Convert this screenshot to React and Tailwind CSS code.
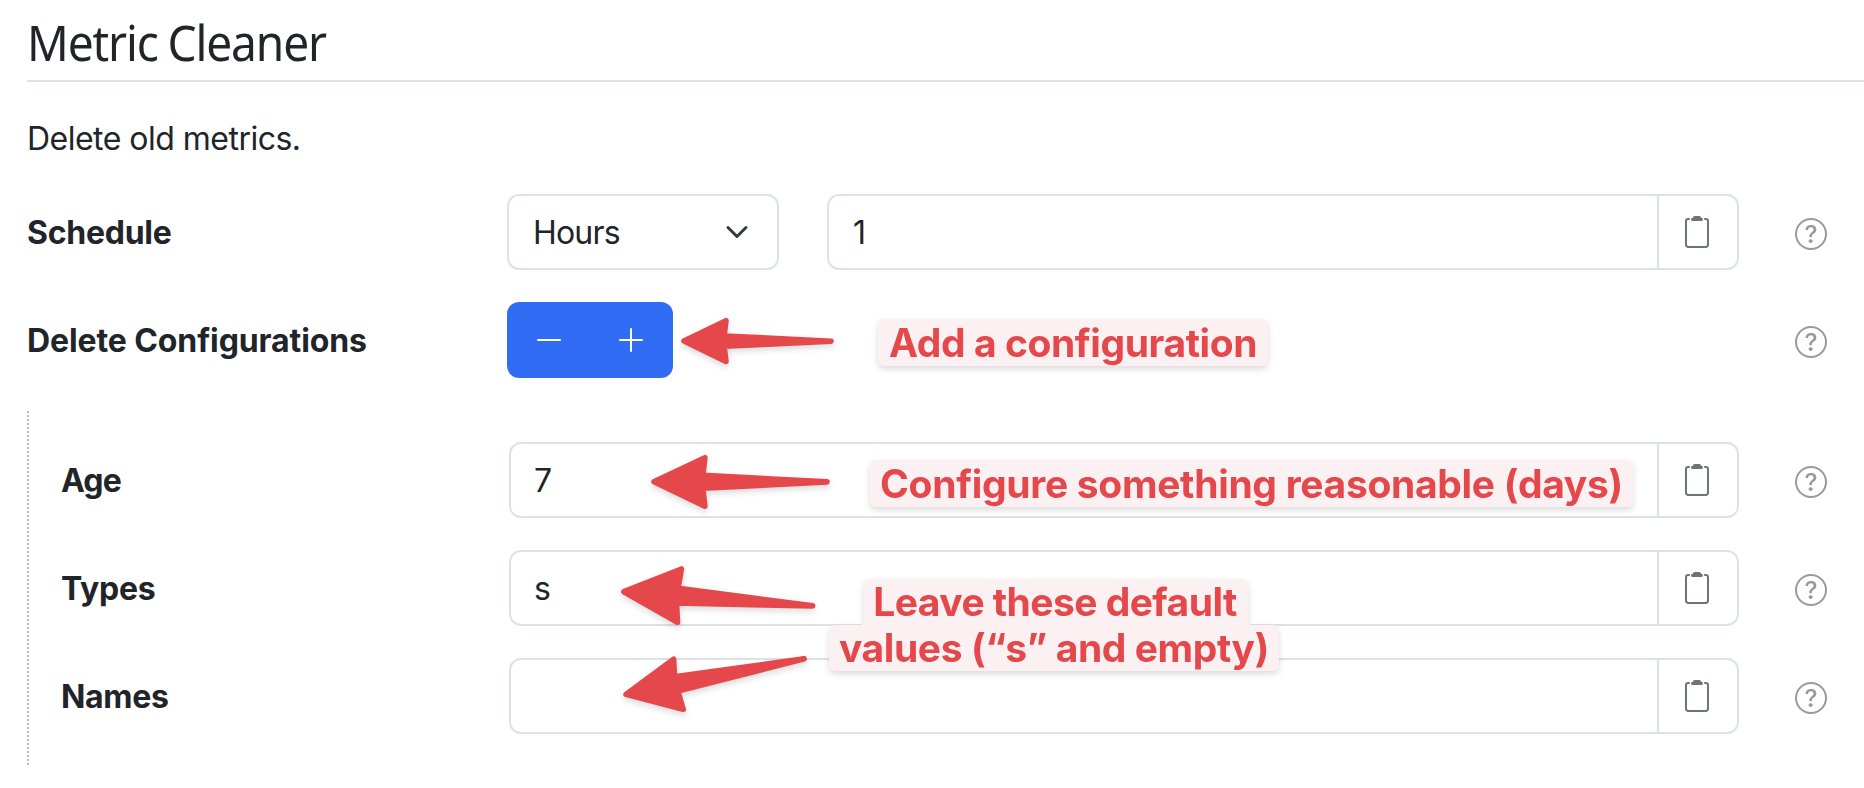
import { BsQuestionCircle } from "react-icons/bs";

function ClipboardIcon() {
  return (
    <svg width="24" height="32" viewBox="0 0 24 32" fill="none">
      <path
        d="M4.8 3H3.2Q1 3 1 5.2V28.6Q1 31 3.4 31H20.6Q23 31 23 28.6V5.2Q23 3 20.8 3H19.2"
        stroke="#6c757d"
        strokeWidth="2"
      />
      <path
        d="M6 3.6Q6 2 7.8 1.8Q8 0 9.8 0H14.2Q16 0 16.2 1.8Q18 2 18 3.6Q18 5 16.6 5H7.4Q6 5 6 3.6Z"
        fill="#6c757d"
      />
    </svg>
  );
}

function Help() {
  return (
    <button className="mt-1 ml-14 shrink-0" aria-label="Help">
      <BsQuestionCircle className="block h-8 w-8 text-[#999999]" />
    </button>
  );
}

function TextField({ value, padding = "pl-6" }) {
  return (
    <div className="flex h-[76px] flex-1 overflow-hidden rounded-xl border-2 border-[#dee2e6] bg-white">
      <div className={"flex flex-1 items-center pt-0.5 " + padding}>{value}</div>
      <button className="flex w-20 items-center justify-center border-l-2 border-[#dee2e6] pr-0.5" aria-label="Copy">
        <ClipboardIcon />
      </button>
    </div>
  );
}

function Row({ label, labelClass, children }) {
  return (
    <div className="flex h-[76px] items-center">
      <div className={"shrink-0 pt-0.5 font-bold " + labelClass}>{label}</div>
      <div className="flex flex-1 items-center">{children}</div>
      <Help />
    </div>
  );
}

const arrows = [
  "M684 341L726 320.7L724.1 336L831 341.2L724.1 346.3L726 361.5Z",
  "M654 481.7L704.9 457.7L702.8 475.4L827 481.9L702.8 488.3L704.9 506.2Z",
  "M623.9 591.7L681.4 569L678.1 588.3L812.7 605.9L676.5 603L677.5 622.2Z",
  "M626 694.4L673.6 659.2L674.5 676.8L804.2 658.8L677.8 691L683.2 709.3Z",
];

function Note({ className, children }) {
  return (
    <div className={"absolute flex items-center justify-center whitespace-nowrap rounded-md bg-[#fbf0f2] text-[39px] font-bold text-[#e5484b] " + className}>
      {children}
    </div>
  );
}

function Annotations() {
  return (
    <div className="pointer-events-none absolute inset-0">
      <svg className="absolute inset-0 drop-shadow-[0_3px_3px_rgba(0,0,0,0.14)]" width="1864" height="788">
        {arrows.map((d) => (
          <path key={d} d={d} fill="#e5484b" stroke="#e5484b" strokeWidth="5.6" strokeLinejoin="round" />
        ))}
      </svg>
      <div className="absolute inset-0 drop-shadow-[0_3px_3px_rgba(0,0,0,0.14)]">
        <Note className="top-[319px] left-[878px] h-[47px] w-[390px] tracking-[-0.42px]">Add a configuration</Note>
        <Note className="top-[460px] left-[870px] h-[47px] w-[763px] tracking-[-0.31px]">
          Configure something reasonable (days)
        </Note>
        <Note className="top-[579px] left-[864px] h-[50px] w-[384px] pr-[2px] pb-[4px] tracking-[-0.55px]">Leave these default</Note>
        <Note className="top-[625px] left-[829px] h-[46px] w-[450px] tracking-[-0.42px]">values (“s” and empty)</Note>
        <svg className="absolute inset-0" width="1864" height="788" fill="#fbf0f2">
          <path d="M864 620Q864 625 859 625H865V620ZM1248 620Q1248 625 1253 625H1247V620Z" />
        </svg>
      </div>
    </div>
  );
}

export default function App() {
  return (
    <div className="relative h-[788px] w-[1864px] overflow-hidden bg-white pl-[27px] font-['Inter',sans-serif] text-[32px] leading-[48px] text-[#212529]">
      <h1 className="h-[82px] border-b-2 border-[#dee2e6] pt-[5px] font-['Noto_Sans',sans-serif] text-[49px] leading-[75px] font-normal">
        <span className="inline-block origin-left scale-x-[0.94] tracking-[-1.2px] [word-spacing:-1px]">Metric Cleaner</span>
      </h1>
      <p className="mt-[33px] mb-[31px] tracking-[-0.52px]">Delete old metrics.</p>

      <div className="flex flex-col gap-8 pr-[37px]">
        <Row label="Schedule" labelClass="w-[480px] tracking-[-0.25px]">
          <button className="mr-12 flex h-[76px] w-[272px] items-center justify-between rounded-xl border-2 border-[#dee2e6] pr-[28px] pl-6">
            <span className="pt-0.5 tracking-[-0.8px]">Hours</span>
            <svg width="24" height="24" viewBox="0 0 16 16" fill="none" stroke="#343a40" strokeWidth="2" strokeLinecap="round" strokeLinejoin="round">
              <path d="m2 5 6 6 6-6" />
            </svg>
          </button>
          <TextField value="1" />
        </Row>
        <Row label="Delete Configurations" labelClass="w-[480px] tracking-[-0.1px]">
          <div className="flex h-[76px] w-[166px] items-center justify-between rounded-xl bg-[#316cf4] px-[30px]">
            <svg width="24" height="24" stroke="#fff" strokeWidth="2" strokeLinecap="round">
              <path d="M1 12H23" />
            </svg>
            <svg width="24" height="24" stroke="#fff" strokeWidth="2" strokeLinecap="round">
              <path d="M1 12H23M12 1V23" />
            </svg>
          </div>
        </Row>
      </div>

      <div className="mt-[33px] mr-[37px] flex flex-col gap-8 border-l-2 border-dotted border-[#b8b8b8] py-[31px] pl-8">
        <Row label="Age" labelClass="w-[448px] tracking-[-0.8px]">
          <TextField value="7" padding="pl-[23px]" />
        </Row>
        <Row label="Types" labelClass="w-[448px] tracking-[-0.3px]">
          <TextField value="s" padding="pl-[23px]" />
        </Row>
        <Row label="Names" labelClass="w-[448px] tracking-[-0.3px]">
          <TextField value="" />
        </Row>
      </div>

      <Annotations />
    </div>
  );
}
